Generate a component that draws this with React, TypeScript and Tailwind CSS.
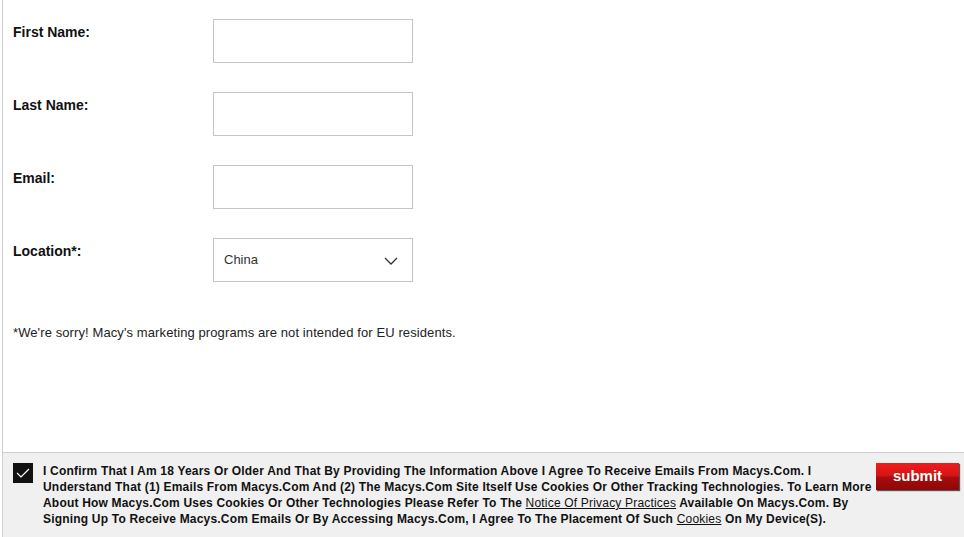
import { useState } from 'react'

const FIELDS = ['First Name:', 'Last Name:', 'Email:']

function Chevron() {
  return (
    <svg width="14" height="8" viewBox="0 0 14 8" fill="none" className="pointer-events-none absolute right-[15px] top-[19px]">
      <polyline points="1,1 7,7 13,1" stroke="#333" strokeWidth="1.3" />
    </svg>
  )
}

export default function App() {
  const [checked, setChecked] = useState(true)

  return (
    <div className="h-[537px] w-[964px] bg-white pl-[2px] font-['Liberation_Sans',Arial,sans-serif] text-[#111]">
      <div className="flex h-full flex-col border-l border-[#cfcfcf]">
        <div className="flex-1 pl-[10px] pt-[19px]">
          {FIELDS.map((label) => (
            <div key={label} className="mb-[29px] flex">
              <label className="w-[200px] pt-[5px] text-[14px] font-bold leading-[16px]">{label}</label>
              <input className="h-[44px] w-[200px] border border-[#c4c4c4] bg-white px-[10px] text-[13px] outline-none" />
            </div>
          ))}
          <div className="flex">
            <label className="w-[200px] pt-[5px] text-[14px] font-bold leading-[16px]">Location*:</label>
            <div className="relative">
              <select
                defaultValue="China"
                className="h-[44px] w-[200px] appearance-none border border-[#c4c4c4] bg-white pl-[10px] text-[13px] text-[#333] outline-none"
              >
                <option>China</option>
                <option>United States</option>
              </select>
              <Chevron />
            </div>
          </div>
          <p className="mt-[43px] text-[13px] leading-[16px] tracking-[0.1px] text-[#222]">
            *We're sorry! Macy's marketing programs are not intended for EU residents.
          </p>
        </div>

        <div className="flex h-[85px] border-t border-[#cfcfcf] bg-[#f0f0f0] pl-[10px] pt-[10px]">
          <button
            onClick={() => setChecked(!checked)}
            className="flex h-[20px] w-[20px] shrink-0 items-center justify-center bg-[#111]"
          >
            {checked && (
              <svg width="14" height="10" viewBox="0 0 14 10" fill="none">
                <polyline points="1,5 5,9 13,1" stroke="#fff" strokeWidth="1.2" />
              </svg>
            )}
          </button>
          <p className="ml-[10px] w-[832px] whitespace-nowrap text-[12px] font-bold leading-[16px] tracking-[0.19px] text-[#111]">
            I Confirm That I Am 18 Years Or Older And That By Providing The Information Above I Agree To Receive Emails From Macys.Com. I
            <br />
            Understand That (1) Emails From Macys.Com And (2) The Macys.Com Site Itself Use Cookies Or Other Tracking Technologies. To Learn More
            <br />
            About How Macys.Com Uses Cookies Or Other Technologies Please Refer To The{' '}
            <a href="#" className="font-normal underline">Notice Of Privacy Practices</a> Available On Macys.Com. By
            <br />
            Signing Up To Receive Macys.Com Emails Or By Accessing Macys.Com, I Agree To The Placement Of Such{' '}
            <a href="#" className="font-normal underline">Cookies</a> On My Device(S).
          </p>
          <button className="ml-[1px] h-[27px] w-[83px] shrink-0 bg-[linear-gradient(to_bottom,#ee1c1c_0%,#d81515_45%,#a50c0c_55%,#8e0707_100%)] text-[15px] font-bold text-white shadow-[1px_1px_1px_#555]">
            submit
          </button>
        </div>
      </div>
    </div>
  )
}
